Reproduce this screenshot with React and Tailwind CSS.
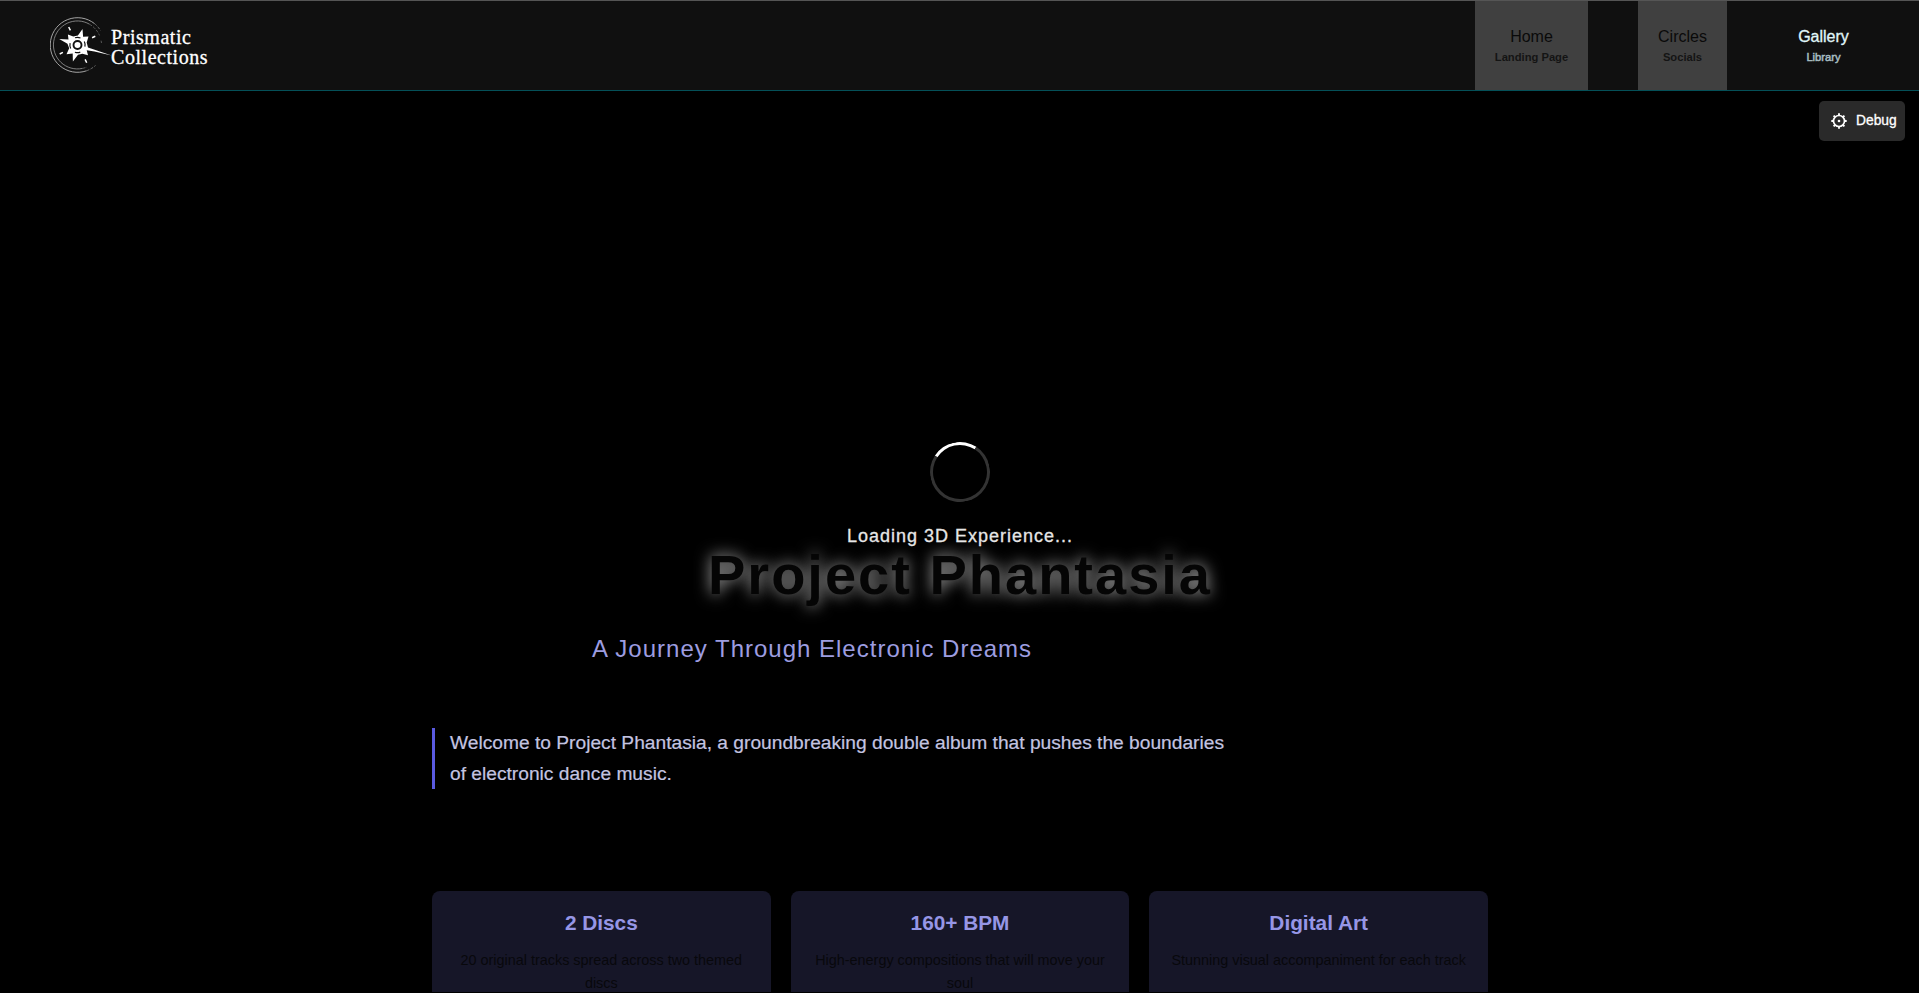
const NAV = [
  { title: 'Home', sub: 'Landing Page', box: 'w-[113px] bg-[#404040]', t: 'text-[#0a0a0a]', s: 'text-[#141414] font-bold' },
  { title: 'Circles', sub: 'Socials', box: 'w-[89px] bg-[#404040]', t: 'text-[#0a0a0a]', s: 'text-[#141414] font-bold' },
  { title: 'Gallery', sub: 'Library', box: 'w-[93px]', t: 'text-[#e0f7fa] [-webkit-text-stroke:0.3px_#e0f7fa]', s: 'text-[#a6bcc0] [-webkit-text-stroke:0.5px_#a6bcc0]' },
];

const CARDS = [
  { title: '2 Discs', text: '20 original tracks spread across two themed discs' },
  { title: '160+ BPM', text: 'High-energy compositions that will move your soul' },
  { title: 'Digital Art', text: 'Stunning visual accompaniment for each track' },
];

function Emblem() {
  return (
    <svg className="mb-px h-[58px] w-[62px] shrink-0" viewBox="-27.5 -29 62 58" fill="none">
      <path d="M17 -21.4A27.3 27.3 0 1 0 9 25.8" stroke="#b4b4b4" strokeWidth=".9" />
      <path d="M17 -21.4A27.3 27.3 0 0 1 23 -14.5M9 25.8A27.3 27.3 0 0 0 18 20.5" stroke="#808080" strokeWidth=".8" strokeDasharray="3 1.4" />
      <path d="M12 -20.8A24 24 0 1 0 5 23.4" stroke="#9a9a9a" strokeWidth=".8" />
      <path d="M12 -20.8A24 24 0 0 1 22 -9.6M23.6 -4.3L24 -2M5 23.4A24 24 0 0 0 9.5 22" stroke="#6a6a6a" strokeWidth=".8" strokeDasharray="3 1.4" />
      <path
        d="M5 -16L5.6 -8.2L11 -8.5L9.2 -2.6L10.5 2.4L18 5L34 10.4L17 6.6L9.2 5.2L10.5 10.3L5 8.8L0.5 9.8L-4.6 16.4L-4.8 8.6L-11 9.3L-8.3 3.2L-10 -1.2L-18.3 -6L-9 -5.4L-9.6 -10.6L-4.2 -8.6L0.4 -9.6Z"
        fill="#fff"
      />
      <path d="M-2.5 -7.2A7.6 7.6 0 0 1 3 -7M6.8 -3.4A7.6 7.6 0 0 1 7.4 1.6M2.8 7.1A7.6 7.6 0 0 1 -2.6 7.2M-6.8 3.4A7.6 7.6 0 0 1 -7.4 -1.8" stroke="#111" strokeWidth="1.2" />
      <circle r="4" stroke="#111" strokeWidth="1.9" />
      <path d="M-8.8 -18l1.7 3.4M17.8 -8.7l-3.2 1.5M-17.8 9l3.2 -1.6M7.6 14.4l1.6 3.4" stroke="#fff" strokeWidth="1.5" />
    </svg>
  );
}

export default function App() {
  return (
    <div className="flex h-[993px] w-full flex-col overflow-hidden bg-black pb-px font-['Liberation_Sans',Arial,sans-serif]">
      <header className="flex h-[91px] shrink-0 items-stretch justify-between border-t border-b border-t-[#555] border-b-[#045058] bg-[#101010] px-[50px]">
        <div className="flex items-center">
          <Emblem />
          <div className="mt-[2px] -ml-px font-['Liberation_Serif',serif] text-[20px] leading-[20px] tracking-[0.55px] text-white [-webkit-text-stroke:0.3px_#fff]">
            <div>Prismatic</div>
            <div>Collections</div>
          </div>
        </div>
        <nav className="-mr-px flex gap-[50px]">
          {NAV.map((n) => (
            <div key={n.title} className={`flex flex-col items-center pt-[25px] ${n.box}`}>
              <span className={`text-base leading-[22px] ${n.t}`}>{n.title}</span>
              <span className={`text-[11.2px] leading-[18px] whitespace-nowrap ${n.s}`}>{n.sub}</span>
            </div>
          ))}
        </nav>
      </header>

      <main className="flex flex-1 flex-col">
        <button className="mt-[10px] mr-[14px] flex h-10 w-[86px] shrink-0 items-center gap-[9px] self-end rounded-[5px] bg-[#2a2a2a] pl-3 text-[13.8px] text-white [-webkit-text-stroke:0.3px_#fff]">
          <svg className="size-4 shrink-0" viewBox="0 0 16 16" fill="none" stroke="#fff">
            <circle cx="8" cy="8" r="5.5" strokeWidth="1.7" />
            <circle cx="8" cy="8" r="1.3" fill="#fff" stroke="none" />
            <path d="M8 .3v2M8 13.7v2M.3 8h2M13.7 8h2M2.6 2.6l1.4 1.4M12 12l1.4 1.4M2.6 13.4L4 12M12 4l1.4-1.4" strokeWidth="1.9" />
          </svg>
          <span className="pt-px">Debug</span>
        </button>

        <div className="mt-[301px] flex flex-col items-center pl-px">
          <div className="size-[60px] rotate-[-12deg] rounded-full border-[3px] border-[#333] border-t-white" />
          <p className="relative z-10 mt-[21px] text-[18px] leading-[27px] tracking-[1px] text-[#e6e6e6] [-webkit-text-stroke:0.3px_#e6e6e6]">
            Loading 3D Experience...
          </p>
          <h1 className="-mt-[7px] text-[56px] leading-[64px] font-bold tracking-[2px] text-[#050505] [text-shadow:0_0_16px_rgba(255,255,255,0.7)]">
            Project Phantasia
          </h1>
        </div>

        <section className="ml-[432px] flex w-[1056px] flex-col">
          <p className="mt-[23px] ml-[160px] text-2xl leading-[38px] tracking-[1px] text-[#9d9de0]">
            A Journey Through Electronic Dreams
          </p>
          <p className="mt-[60px] w-[800px] border-l-[3px] border-[#5a5ae0] pl-[15px] text-[19.2px] leading-[30.72px] text-[#c4c4e0] [-webkit-text-stroke:0.2px_#c4c4e0]">
            Welcome to Project Phantasia, a groundbreaking double album that pushes the boundaries of electronic dance music.
          </p>
          <div className="mt-[102px] grid grid-cols-3 gap-5">
            {CARDS.map((c) => (
              <article key={c.title} className="h-[101px] rounded-t-lg bg-[#161628] px-5 pt-[19px] text-center">
                <h3 className="text-[20.8px] leading-[25px] font-bold text-[#9696e6]">{c.title}</h3>
                <p className="mt-[14px] text-[14.4px] leading-[23.04px] text-[#08080c]">{c.text}</p>
              </article>
            ))}
          </div>
        </section>
      </main>
    </div>
  );
}
